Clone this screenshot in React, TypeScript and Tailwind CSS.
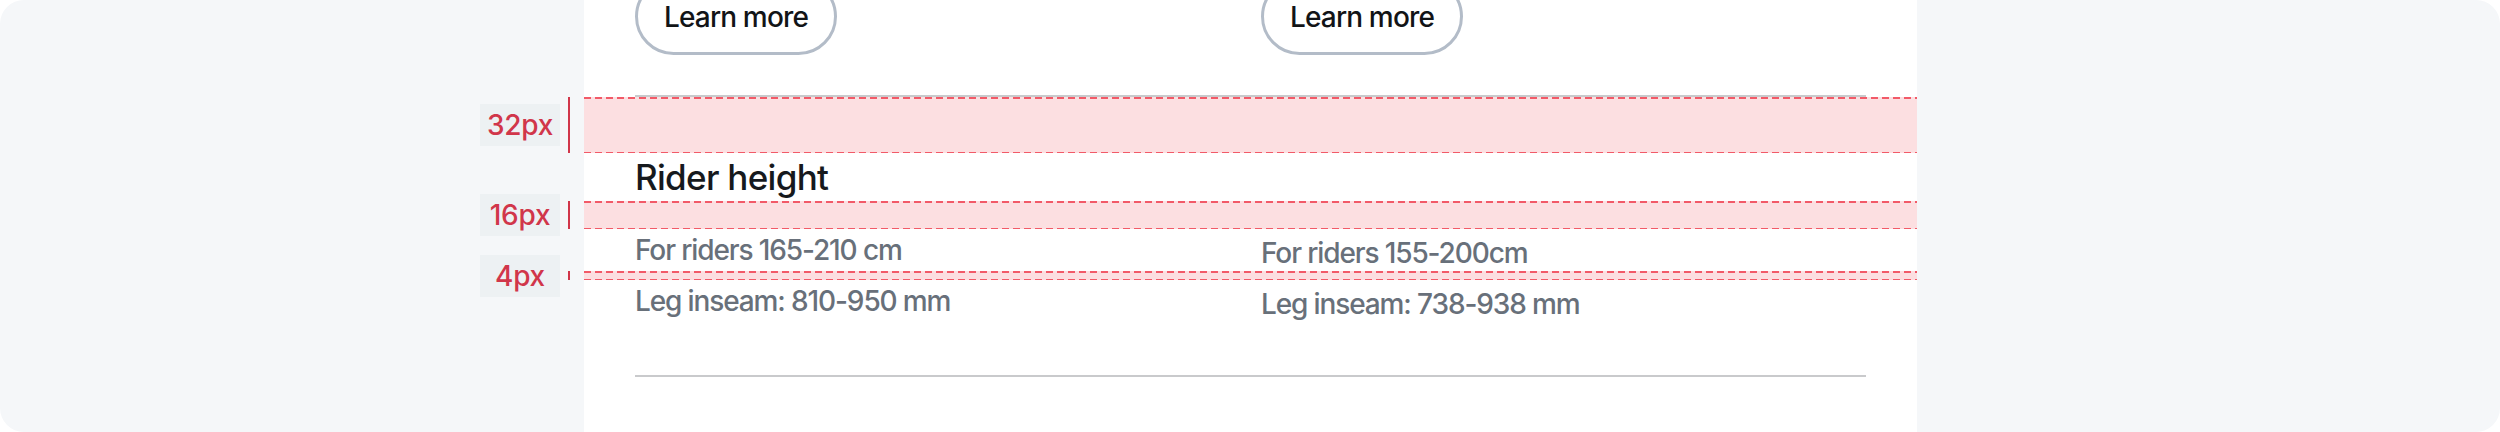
import React from 'react';

const font = { fontFamily: 'Inter, "Liberation Sans", sans-serif' };

function Dashed() {
  return (
    <div className="h-[1.5px] w-full bg-[image:repeating-linear-gradient(90deg,#f25a68_0_7px,transparent_7px_11px)]" />
  );
}

function Spacer({ label, height }: { label: string; height: string }) {
  return (
    <div className={`grid grid-cols-[584px_1333px_1fr] grid-rows-[minmax(0,1fr)] ${height}`}>
      {/* annotation label */}
      <div className="flex min-h-0 items-center justify-end gap-[8px] pr-[14px]">
        <div className="flex h-[42px] w-[80px] shrink-0 items-center justify-center bg-[#edf1f3] text-[28px] font-medium leading-none tracking-[-0.01em] text-[#d1364a]">
          {label}
        </div>
        <div className="w-[2px] self-stretch bg-[#d1364a]" />
      </div>
      <div className="flex flex-col justify-between bg-[#fcdfe1]">
        <Dashed />
        <Dashed />
      </div>
      <div />
    </div>
  );
}

function Row({ children, height }: { children?: React.ReactNode; height: string }) {
  return (
    <div className={`grid grid-cols-[584px_1333px_1fr] grid-rows-[minmax(0,1fr)] ${height}`}>
      <div />
      <div className="bg-white px-[51px]">{children}</div>
      <div />
    </div>
  );
}

function Cols({ left, right }: { left?: React.ReactNode; right?: React.ReactNode }) {
  return (
    <div className="grid h-full grid-cols-2 gap-[21px]">
      <div>{left}</div>
      <div>{right}</div>
    </div>
  );
}

function LearnMore() {
  return (
    <button className="-mt-[22px] flex h-[77px] w-[202px] items-center justify-center rounded-full border-[3px] border-[#b3bcc8] bg-white text-[28px] font-medium tracking-[-0.03em] text-[#121417]">
      Learn more
    </button>
  );
}

export default function App() {
  const sub = 'text-[28px] font-medium leading-[42px] text-[#68707a] tracking-[-0.04em]';
  return (
    <div className="h-[432px] w-[2500px] overflow-hidden bg-white" style={font}>
      <div className="flex h-full flex-col overflow-hidden rounded-[24px] bg-[#f5f7f9]">
        <Row height="h-[97px] shrink-0">
          <div className="flex h-full flex-col justify-between">
            <Cols left={<LearnMore />} right={<LearnMore />} />
            <div className="h-[2px] bg-[#c9cacc]" />
          </div>
        </Row>
        <Spacer label="32px" height="h-[56px] shrink-0" />
        <Row height="h-[48px] shrink-0">
          <Cols
            left={
              <h3 className="text-[35px] font-medium leading-[48px] tracking-[-0.02em] text-[#16191d]">
                Rider height
              </h3>
            }
          />
        </Row>
        <Spacer label="16px" height="h-[28px] shrink-0" />
        <Row height="h-[42px] shrink-0">
          <Cols
            left={<p className={sub}>For riders 165-210 cm</p>}
            right={<p className={`${sub} pt-[3px]`}>For riders 155-200cm</p>}
          />
        </Row>
        <Spacer label="4px" height="h-[9px] shrink-0" />
        <Row height="h-[41px] shrink-0">
          <Cols
            left={<p className={sub}>Leg inseam: 810-950 mm</p>}
            right={<p className={`${sub} pt-[3px]`}>Leg inseam: 738-938 mm</p>}
          />
        </Row>
        <Row height="h-[54px] shrink-0" />
        <Row height="h-[2px] shrink-0">
          <div className="h-[2px] bg-[#c9cacc]" />
        </Row>
        <Row height="flex-1" />
      </div>
    </div>
  );
}
